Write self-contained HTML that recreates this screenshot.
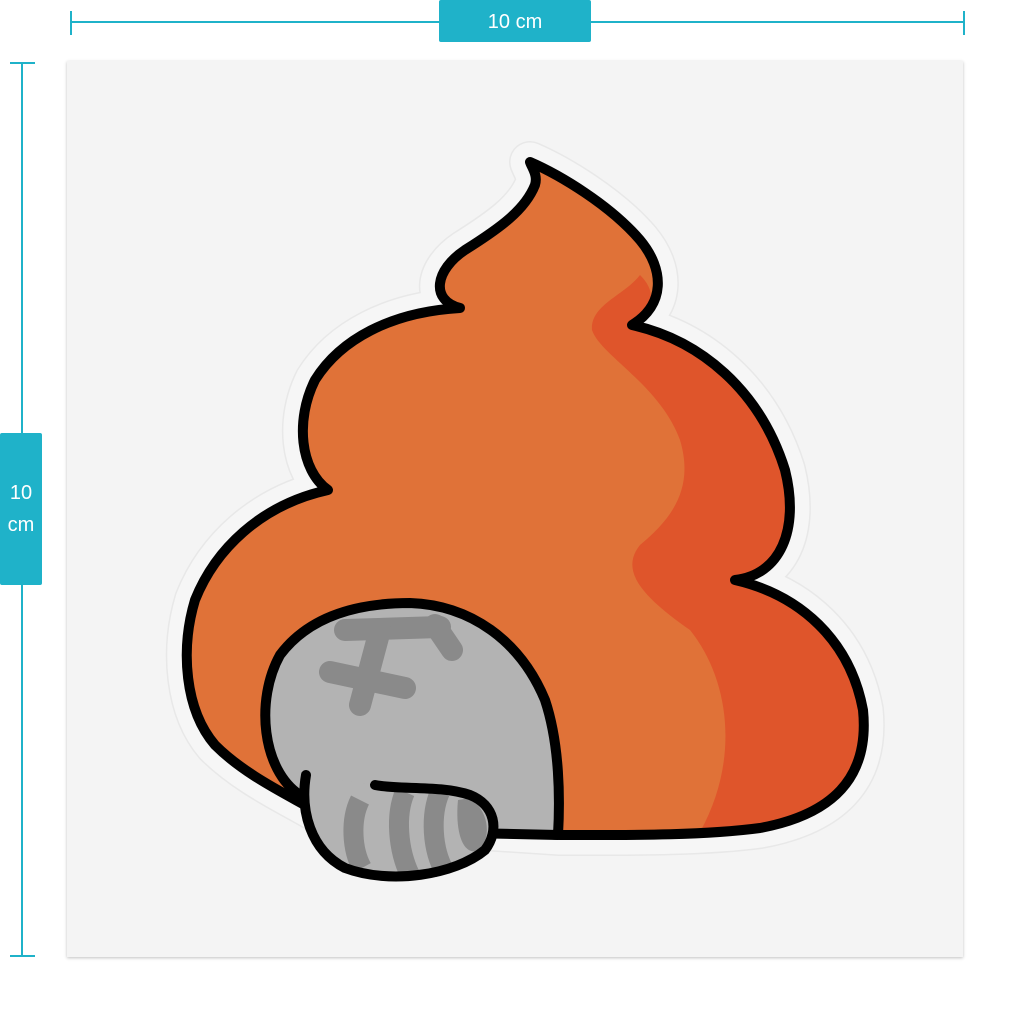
<!DOCTYPE html>
<html><head><style>
body{margin:0;width:1024px;height:1024px;background:#fff;position:relative;overflow:hidden;font-family:"Liberation Sans",sans-serif}
.card{position:absolute;left:67px;top:61px;width:896px;height:896px;background:#f4f4f4;box-shadow:0 1px 3px rgba(0,0,0,.25)}
.lbl{position:absolute;background:#1fb2c9;color:#fff;font-size:20px;text-align:center;border-radius:2px}
</style></head><body>
<svg width="1024" height="1024" style="position:absolute;left:0;top:0">
<g stroke="#1fb2c9" stroke-width="2"><line x1="71" y1="22" x2="964" y2="22"/><line x1="71" y1="11" x2="71" y2="35"/><line x1="964" y1="11" x2="964" y2="35"/>
<line x1="22" y1="63" x2="22" y2="956"/><line x1="10" y1="63" x2="35" y2="63"/><line x1="10" y1="956" x2="35" y2="956"/></g></svg>
<div class="lbl" style="left:439px;top:0;width:152px;height:42px;line-height:44px">10 cm</div>
<div class="lbl" style="left:0;top:433px;width:42px;height:152px;padding-top:44px;box-sizing:border-box;line-height:32px">10<br>cm</div>
<div class="card"></div>
<svg width="1024" height="1024" style="position:absolute;left:0;top:0">
<defs><path id="p" d="M530,162 C560,175 610,205 640,240 C665,270 665,305 632,325 C700,340 760,390 785,470 C800,530 780,575 735,580 C800,595 850,640 863,710 C870,780 830,815 760,828 C700,836 620,835 560,835 L330,820 C300,800 250,780 215,745 C185,710 180,650 195,600 C215,550 260,505 328,490 C300,470 295,420 315,380 C340,340 390,312 460,308 C430,300 435,270 465,250 C500,228 525,210 535,185 C538,175 532,168 530,162 Z"/></defs>
<use href="#p" fill="none" stroke="#e8e8e8" stroke-width="42" stroke-linejoin="round"/>
<use href="#p" fill="none" stroke="#f6f6f6" stroke-width="39" stroke-linejoin="round"/>
<use href="#p" fill="#e07238"/>
<path d="M640,275 C625,295 590,305 592,330 C600,355 660,385 680,440 C695,490 670,520 640,545 C620,570 640,595 690,630 C730,680 740,760 700,832 L760,828 C830,815 870,780 863,710 C850,640 800,595 735,580 C780,575 800,530 785,470 C760,390 700,340 632,325 C650,312 660,295 640,275 Z" fill="#df552b"/>
<use href="#p" fill="none" stroke="#000" stroke-width="10" stroke-linejoin="round"/>
<path d="M300,795 C262,770 255,700 280,655 C310,615 360,603 410,603 C470,605 520,640 545,700 C560,745 560,800 558,835 L330,830 Z" fill="#b3b3b3" stroke="#000" stroke-width="10" stroke-linejoin="round"/>
<g stroke="#8a8a8a" stroke-width="22" stroke-linecap="round" fill="none">
<path d="M345,630 L440,627"/><path d="M380,630 L360,705"/><path d="M330,672 L405,688"/><path d="M435,625 L452,650"/></g>
<path d="M306,775 C300,810 310,850 345,868 C390,885 455,875 485,850 C500,830 495,805 470,795 C440,785 400,790 375,785" fill="#b3b3b3"/>
<g stroke="#8a8a8a" stroke-width="20" fill="none">
<path d="M360,800 C350,820 352,850 362,868"/><path d="M405,792 C395,815 398,850 410,875"/><path d="M440,792 C430,815 432,850 445,872"/></g>
<path d="M470,798 C488,810 492,835 480,850 C462,858 455,830 458,800 Z" fill="#8a8a8a"/>
<path d="M306,775 C300,810 310,850 345,868 C390,885 455,875 485,850 C500,830 495,805 470,795 C440,785 400,790 375,785" fill="none" stroke="#000" stroke-width="10" stroke-linecap="round"/>
</svg>
</body></html>
